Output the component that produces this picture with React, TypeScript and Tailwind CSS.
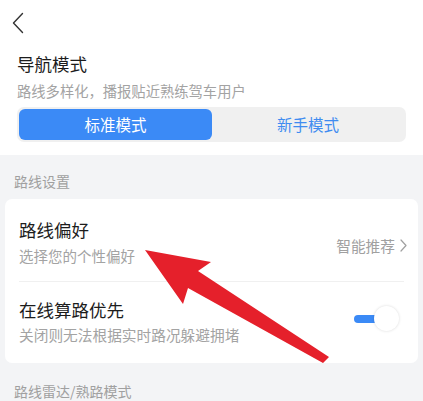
import React from "react";

export default function App() {
  return (
    <div
      className="relative w-[423px] h-[401px] overflow-hidden bg-[#f3f4f6]"
      style={{ fontFamily: '"Noto Sans CJK SC", "Noto Sans", sans-serif' }}
    >
      <div className="bg-white pb-[13px]">
        <div className="h-[46px] flex items-center pl-[12px]">
          <svg width="12" height="22" viewBox="0 0 12 22" fill="none">
            <path d="M10.5 1.5 L1.5 11 L10.5 20.5" stroke="#333" strokeWidth="1.4" strokeLinecap="round" strokeLinejoin="round" />
          </svg>
        </div>
        <div className="px-[17px] mt-[6px]">
          <div className="text-[17.5px] leading-[24px] text-[#1c1c1c]">导航模式</div>
          <div className="text-[14.3px] leading-[20px] text-[#a3a3a3] mt-[5px]">路线多样化，播报贴近熟练驾车用户</div>
          <div className="mt-[6px] h-[35px] rounded-[7px] bg-[#f0f0f0] p-[2px] flex">
            <div className="w-[193px] rounded-[6px] bg-[#3b8af6] flex items-center justify-center text-white text-[15.5px]">标准模式</div>
            <div className="flex-1 flex items-center justify-center text-[#3f8cf0] text-[15.5px]">新手模式</div>
          </div>
        </div>
      </div>
      <div className="px-[14px] mt-[16px] text-[14px] leading-[20px] text-[#a0a0a0]">路线设置</div>
      <div className="mx-[5px] mt-[8px] bg-white rounded-[7px] px-[14px]">
        <div className="flex items-center pt-[19px] pb-[15px] border-b border-[#f0f0f0]">
          <div className="flex-1">
            <div className="text-[17.5px] leading-[24px] text-[#1c1c1c]">路线偏好</div>
            <div className="text-[14.5px] leading-[20px] text-[#a3a3a3] mt-[4px]">选择您的个性偏好</div>
          </div>
          <div className="flex items-center gap-[5px] text-[14.7px] text-[#a0a0a0] mt-[8px] mr-[-3px]">
            <span>智能推荐</span>
            <svg width="7" height="13" viewBox="0 0 7 13" fill="none">
              <path d="M1 1 L6 6.5 L1 12" stroke="#a0a0a0" strokeWidth="1.2" strokeLinecap="round" strokeLinejoin="round" />
            </svg>
          </div>
        </div>
        <div className="flex items-center pt-[16px] pb-[18px]">
          <div className="flex-1">
            <div className="text-[17.5px] leading-[24px] text-[#1c1c1c]">在线算路优先</div>
            <div className="text-[14.7px] leading-[20px] text-[#a3a3a3] mt-[3px]">关闭则无法根据实时路况躲避拥堵</div>
          </div>
          <div className="relative w-[45px] h-[26px] mr-[5px] mt-[-6px]">
            <div className="absolute left-[0px] top-[9px] w-[26px] h-[8px] rounded-full bg-[#3b8af6]" />
            <div className="absolute right-[0px] top-[0px] w-[25px] h-[25px] rounded-full bg-white shadow-[0_0_3px_rgba(0,0,0,0.15)]" />
          </div>
        </div>
      </div>
      <div className="px-[14px] mt-[18px] text-[14px] leading-[20px] text-[#a0a0a0]">路线雷达/熟路模式</div>
      <svg className="absolute left-0 top-0" width="423" height="401" viewBox="0 0 423 401">
        <polygon
          points="145,250 211,262 198,271 329,357 323,363 188,288 183,304"
          fill="#e5202b"
        />
      </svg>
    </div>
  );
}
